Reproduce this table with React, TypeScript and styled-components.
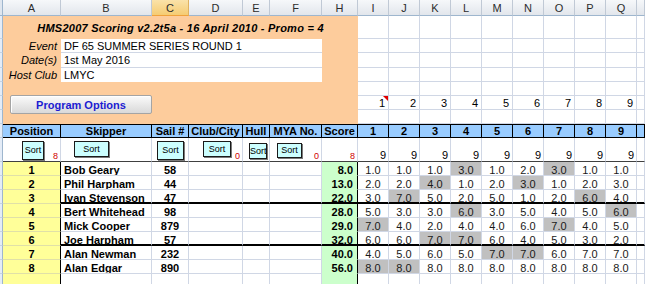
import React from 'react';
import styled, { createGlobalStyle } from 'styled-components';

const GRID = '#d0d7e5';

const GlobalStyle = createGlobalStyle`
  html, body { margin: 0; padding: 0; overflow: hidden; background: #fff; }
  body { font-family: 'Liberation Sans', Arial, sans-serif; font-size: 11px; color: #000; }
  * { box-sizing: border-box; }
`;

const Sheet = styled.div`
  display: grid;
  grid-template-columns: 3px 58px 91px 37px 54px 27px 52px 36px repeat(9, 31px) 8px;
  grid-template-rows: 16px 23px 14px 15px 14px 14px 14px 14px 14px 24px repeat(9, 14px);
  width: 645px;
  height: 284px;
  overflow: hidden;
`;

const Corner = styled.div`
  background: #dfe6ef;
  border-right: 1px solid #9eb6ce;
  border-bottom: 1px solid #9eb6ce;
`;

const ColHead = styled.div<{ $active?: boolean }>`
  display: flex;
  align-items: center;
  justify-content: center;
  font-size: 11px;
  color: #2c2c2c;
  background: ${(p) =>
    p.$active ? 'linear-gradient(#fae2a9, #f5cc73)' : 'linear-gradient(#f6f8fa, #e2e6ec)'};
  border-right: 1px solid ${(p) => (p.$active ? '#e0b260' : '#c0c9d5')};
  border-bottom: 1px solid ${(p) => (p.$active ? '#f0a23c' : '#9eb6ce')};
`;

const RowHead = styled.div`
  background: #e4ecf7;
  border-right: 1px solid #9eb6ce;
  border-bottom: 1px solid #c5d3e3;
`;

const Panel = styled.div`
  grid-column: 2 / 9;
  grid-row: 2 / 9;
  background: #fdcc9c;
  display: flex;
  flex-direction: column;
`;

const Title = styled.div`
  height: 23px;
  display: flex;
  align-items: center;
  justify-content: center;
  padding-top: 1px;
  font-weight: bold;
  font-style: italic;
  font-size: 11px;
  letter-spacing: 0.25px;
`;

const Form = styled.div`
  display: grid;
  grid-template-columns: 58px 261px;
  grid-template-rows: 14px 15px 14px;
`;

const Label = styled.div`
  font-style: italic;
  text-align: right;
  padding-right: 4px;
  line-height: 14px;
`;

const Value = styled.div<{ $last?: boolean }>`
  background: #fff;
  padding-left: 3px;
  line-height: 14px;
  border-bottom: 1px solid ${(p) => (p.$last ? '#fff' : GRID)};
`;

const OptionsButton = styled.button`
  margin: 13px 0 0 7px;
  width: 142px;
  height: 19px;
  padding: 0;
  font-family: 'Liberation Sans', Arial, sans-serif;
  font-size: 11px;
  font-weight: bold;
  color: #1c1cd2;
  background: linear-gradient(#fbfbfb, #e6e6e6 60%, #d9d9d9);
  border: 1px solid #a4a4a4;
  border-radius: 2px;
  box-shadow: inset 1px 1px 0 #fff;
`;

const GridCell = styled.div`
  position: relative;
  border-right: 1px solid ${GRID};
  border-bottom: 1px solid ${GRID};
`;

const NumCell = styled(GridCell)`
  text-align: right;
  padding-right: 3px;
  line-height: 14px;
`;

const CommentMark = styled.span`
  position: absolute;
  top: 0;
  right: 0;
  width: 0;
  height: 0;
  border-top: 5px solid #e00000;
  border-left: 5px solid transparent;
`;

const HeadCell = styled.div`
  background: #99ccff;
  border-top: 1px solid #000;
  border-bottom: 1px solid #000;
  border-right: 1px solid #000;
  font-weight: bold;
  text-align: center;
  line-height: 12px;
  white-space: nowrap;
  overflow: hidden;
`;

const SortCell = styled.div`
  position: relative;
  display: flex;
  align-items: flex-end;
  justify-content: flex-end;
  padding-right: 2px;
  line-height: 11px;
  border-right: 1px solid ${GRID};
  border-bottom: 1px solid #404040;
`;

const Count = styled.span`
  color: #d00000;
  font-size: 9px;
  line-height: 9px;
`;

const SortButton = styled.div<{ $left: number; $top: number; $w: number; $h: number }>`
  position: absolute;
  left: ${(p) => p.$left}px;
  top: ${(p) => p.$top}px;
  width: ${(p) => p.$w}px;
  height: ${(p) => p.$h}px;
  background: #ccffff;
  border: 1px solid #1a1a1a;
  box-shadow: 1px 1px 0 #7a7a7a;
  font-size: 9px;
  line-height: ${(p) => p.$h - 2}px;
  text-align: center;
  white-space: nowrap;
  overflow: hidden;
`;

const DataCell = styled.div<{ $sep?: boolean }>`
  line-height: 14px;
  padding-top: 1px;
  border-right: 1px solid ${GRID};
  border-bottom: ${(p) => (p.$sep ? '2px solid #000' : `1px solid ${GRID}`)};
  white-space: nowrap;
  overflow: hidden;
`;

const PosCell = styled(DataCell)`
  background: #ffff99;
  font-weight: bold;
  text-align: center;
  border-right: 1px solid #000;
  border-bottom: 1px solid #e0e0a8;
`;

const NameCell = styled(DataCell)`
  font-weight: bold;
  padding-left: 3px;
`;

const SailCell = styled(DataCell)`
  font-weight: bold;
  text-align: center;
`;

const ScoreCell = styled(DataCell)`
  background: #ccffcc;
  font-weight: bold;
  text-align: right;
  padding-right: 4px;
  border-right: 1px solid #000;
  border-bottom: ${(p) => (p.$sep ? '2px solid #000' : '1px solid #ccffcc')};
`;

const RaceCell = styled(DataCell)<{ $drop?: boolean }>`
  text-align: center;
  color: #1a1a1a;
  background: ${(p) => (p.$drop ? '#c0c0c0' : '#fff')};
`;

const letters = ['A', 'B', 'C', 'D', 'E', 'F', 'H', 'I', 'J', 'K', 'L', 'M', 'N', 'O', 'P', 'Q', ''];
const races = [1, 2, 3, 4, 5, 6, 7, 8, 9];
const headers = ['Position', 'Skipper', 'Sail #', 'Club/City', 'Hull', 'MYA No.', 'Score'];

const sortRow = [
  { btn: { l: 19, t: 3, w: 22, h: 19 }, count: '8' },
  { btn: { l: 13, t: 3, w: 35, h: 16 } },
  { btn: { l: 5, t: 3, w: 27, h: 19 } },
  { btn: { l: 14, t: 3, w: 28, h: 16 }, count: '0' },
  { btn: { l: 6, t: 5, w: 18, h: 16 } },
  { btn: { l: 7, t: 5, w: 25, h: 15 }, count: '0' },
  { count: '8' },
];

const results = [
  { pos: '1', name: 'Bob Geary', sail: '58', score: '8.0', r: [1, 1, 1, 3, 1, 2, 3, 1, 1], drop: [3, 6] },
  { pos: '2', name: 'Phil Harpham', sail: '44', score: '13.0', r: [2, 2, 4, 1, 2, 3, 1, 2, 3], drop: [2, 5] },
  { pos: '3', name: 'Ivan Stevenson', sail: '47', score: '22.0', r: [3, 7, 5, 2, 5, 1, 2, 6, 4], drop: [1, 7] },
  { pos: '4', name: 'Bert Whitehead', sail: '98', score: '28.0', r: [5, 3, 3, 6, 3, 5, 4, 5, 6], drop: [3, 8] },
  { pos: '5', name: 'Mick Cooper', sail: '879', score: '29.0', r: [7, 4, 2, 4, 4, 6, 7, 4, 5], drop: [0, 6] },
  { pos: '6', name: 'Joe Harpham', sail: '57', score: '32.0', r: [6, 6, 7, 7, 6, 4, 5, 3, 2], drop: [2, 3] },
  { pos: '7', name: 'Alan Newman', sail: '232', score: '40.0', r: [4, 5, 6, 5, 7, 7, 6, 7, 7], drop: [4, 5] },
  { pos: '8', name: 'Alan Edgar', sail: '890', score: '56.0', r: [8, 8, 8, 8, 8, 8, 8, 8, 8], drop: [0, 1] },
  { pos: '', name: '', sail: '', score: '', r: [], drop: [] },
];

const blankRight = (key: string) =>
  Array.from({ length: 10 }, (_, i) => <GridCell key={`${key}-${i}`} />);

export default function App() {
  return (
    <>
      <GlobalStyle />
      <Sheet>
        <Corner />
        {letters.map((l, i) => (
          <ColHead key={`col${i}`} $active={l === 'C'}>
            {l}
          </ColHead>
        ))}

        <Panel>
          <Title>HMS2007 Scoring v2.2t5a - 16 April 2010 - Promo = 4</Title>
          <Form>
            <Label>Event</Label>
            <Value>DF 65 SUMMER SERIES ROUND 1</Value>
            <Label>Date(s)</Label>
            <Value>1st May 2016</Value>
            <Label>Host Club</Label>
            <Value $last>LMYC</Value>
          </Form>
          <OptionsButton>Program Options</OptionsButton>
        </Panel>

        {[2, 3, 4, 5, 6].map((r) => (
          <React.Fragment key={r}>
            <RowHead />
            {blankRight(`r${r}`)}
          </React.Fragment>
        ))}
        <RowHead />
        {races.map((n) => (
          <NumCell key={`n${n}`}>
            {n}
            {n === 1 && <CommentMark />}
          </NumCell>
        ))}
        <GridCell />
        <RowHead />
        {blankRight('r8')}

        <RowHead />
        {headers.map((h) => (
          <HeadCell key={h}>{h}</HeadCell>
        ))}
        {races.map((n) => (
          <HeadCell key={`h${n}`}>{n}</HeadCell>
        ))}
        <HeadCell />

        <RowHead />
        {sortRow.map((s, i) => (
          <SortCell key={`s${i}`}>
            {s.count && <Count>{s.count}</Count>}
            {s.btn && (
              <SortButton $left={s.btn.l} $top={s.btn.t} $w={s.btn.w} $h={s.btn.h}>
                Sort
              </SortButton>
            )}
          </SortCell>
        ))}
        {races.map((n) => (
          <SortCell key={`c${n}`}>9</SortCell>
        ))}
        <SortCell />

        {results.map((row, i) => {
          const sep = row.pos === '3' || row.pos === '6';
          return (
            <React.Fragment key={`d${i}`}>
              <RowHead />
              <PosCell>{row.pos}</PosCell>
              <NameCell $sep={sep}>{row.name}</NameCell>
              <SailCell $sep={sep}>{row.sail}</SailCell>
              <DataCell $sep={sep} />
              <DataCell $sep={sep} />
              <DataCell $sep={sep} />
              <ScoreCell $sep={sep}>{row.score}</ScoreCell>
              {races.map((_, j) => (
                <RaceCell key={j} $sep={sep} $drop={row.drop.includes(j)}>
                  {row.r[j] !== undefined ? row.r[j].toFixed(1) : ''}
                </RaceCell>
              ))}
              <DataCell $sep={sep} />
            </React.Fragment>
          );
        })}
      </Sheet>
    </>
  );
}
